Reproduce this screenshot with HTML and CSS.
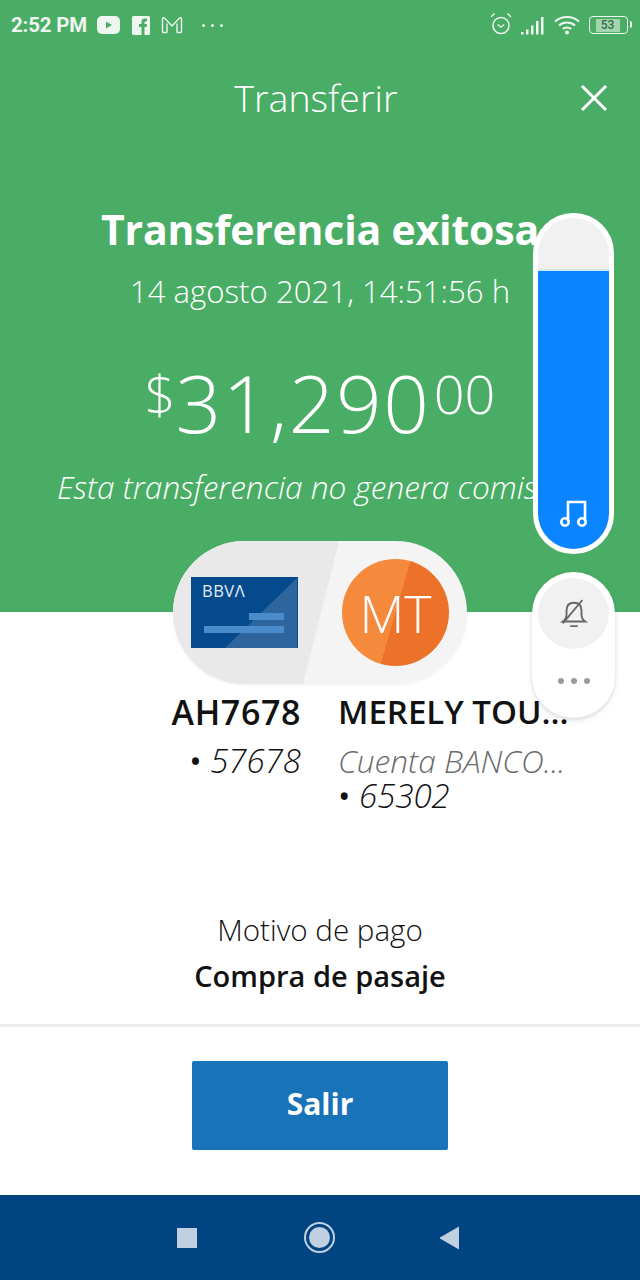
FILE: index.html
```html
<!DOCTYPE html>
<html lang="es">
<head>
<meta charset="utf-8">
<title>Transferir</title>
<link rel="stylesheet" href="styles.css">
</head>
<body>
<div class="screen">
  <section class="hero">
    <div class="status">
      <div class="status-left">
        <span class="clock">2:52 PM</span>
        <svg class="st-yt" viewBox="0 0 23 18"><rect width="23" height="18" rx="5" fill="#eef6ef"/><path d="M9 5.500v7l6-3.500z" fill="#4bad66"/></svg>
        <svg class="st-fb" viewBox="0 0 18 19"><rect width="18" height="19" rx="1.500" fill="#eef6ef"/><path d="M9.500 19v-8H7V8h2.500V5.800C9.500 3.600 10.800 2.500 12.800 2.500H15V5.500H13.600C12.700 5.500 12.500 5.900 12.500 6.600V8H15L14.600 11H12.500V19z" fill="#4bad66"/></svg>
        <svg class="st-mail" viewBox="0 0 22 18"><path d="M1.500 16.500V2.800c0-1.100 1.100-1.500 1.900-.7L11 10l7.600-7.900c.8-.8 1.900-.4 1.900.7v13.700M6 16.500V7.500M16 16.500V7.500M1.500 16.500H6M16 16.500h4.500" fill="none" stroke="#eef6ef" stroke-width="1.400"/></svg>
        <span class="st-dots"><i></i><i></i><i></i></span>
      </div>
      <div class="status-right">
        <svg class="st-alarm" viewBox="0 0 22 23"><circle cx="11" cy="13.500" r="8" fill="none" stroke="#eef6ef" stroke-width="1.500"/><path d="M7.800 12.500l3.200 2.700 3.200-2.700M1 5l3.500-3.500M21 5l-3.500-3.500" fill="none" stroke="#eef6ef" stroke-width="1.400"/></svg>
        <svg class="st-signal" viewBox="0 0 24 19"><path d="M1 16h2.500v2.500H1zM6 13.500h2.500v5H6zM11 9.500h2.500v9H11zM16 5h2.500v13.500H16zM21 1h2.500v17.500H21z" fill="#eef6ef"/></svg>
        <svg class="st-wifi" viewBox="0 0 26 21"><path d="M1 7.500c6.500-6 17.500-6 24 0M5 11.500c4.500-4 11.500-4 16 0M8.800 15c2.300-1.900 6.100-1.900 8.400 0" fill="none" stroke="#eef6ef" stroke-width="2"/><circle cx="13" cy="18.500" r="2" fill="#eef6ef"/></svg>
        <div class="st-battery"><span class="st-level">53</span></div>
      </div>
    </div>
    <header class="title-bar">
      <h1 class="title">Transferir</h1>
      <svg class="close" viewBox="0 0 28 28"><path d="M2 2l24 24M26 2L2 26" fill="none" stroke="#fff" stroke-width="3"/></svg>
    </header>
    <h2 class="headline">Transferencia exitosa</h2>
    <p class="stamp">14 agosto 2021, 14:51:56 h</p>
    <p class="amount"><span class="cur">$</span><span class="whole">31,290</span><span class="cents">00</span></p>
    <p class="note">Esta transferencia no genera comisión</p>
  </section>

  <main class="details">
    <div class="parties">
      <div class="pill">
        <div class="pill-left">
          <svg class="bank-card" viewBox="0 0 107 71">
            <rect width="107" height="71" fill="#064a8e"/>
            <path d="M34 71L106 1v70z" fill="#2e659c"/>
            <rect x="58" y="36" width="35" height="7" fill="#4a8ccb"/>
            <rect x="13" y="49" width="80" height="7" fill="#4a8ccb"/>
            <text x="11" y="20" class="bank-name">BBVΛ</text>
          </svg>
        </div>
        <div class="pill-right">
          <div class="avatar">MT</div>
        </div>
      </div>
    </div>
    <div class="accounts">
      <div class="acct acct-from">
        <div class="acct-name acct-code">AH7678</div>
        <div class="acct-num">• <em>57678</em></div>
      </div>
      <div class="acct acct-to">
        <div class="acct-name">MERELY TOU...</div>
        <div class="acct-bank">Cuenta BANCO...</div>
        <div class="acct-num">• <em>65302</em></div>
      </div>
    </div>
    <div class="reason">
      <div class="reason-label">Motivo de pago</div>
      <div class="reason-value">Compra de pasaje</div>
    </div>
  </main>

  <footer class="actions">
    <button class="exit" type="button">Salir</button>
  </footer>

  <nav class="navbar">
    <span class="nav-square"></span>
    <span class="nav-home"><span class="nav-home-dot"></span></span>
    <svg class="nav-back" viewBox="0 0 20 24"><path d="M1 12L20 1v22z" fill="#c0d0e1" stroke="#c0d0e1" stroke-linejoin="round"/></svg>
  </nav>

  <!-- system volume panel floating above the app -->
  <div class="volume">
    <div class="volume-fill">
      <svg class="note-icon" viewBox="0 0 28 28"><path d="M8 22V3h17v19" fill="none" stroke="#fff" stroke-width="2.600"/><circle cx="5" cy="23" r="3.700" fill="none" stroke="#fff" stroke-width="2.600"/><circle cx="22" cy="23" r="3.700" fill="none" stroke="#fff" stroke-width="2.600"/></svg>
    </div>
  </div>
  <div class="ringer">
    <div class="ringer-btn">
      <svg class="bell" viewBox="0 0 30 32"><path d="M3 24c3-2 4-4 4-8v-4c0-5 3-8 8-8s8 3 8 8v4c0 4 1 6 4 8z" fill="none" stroke="#666" stroke-width="2"/><path d="M11 29h8M3 26L24 1" fill="none" stroke="#666" stroke-width="2"/></svg>
    </div>
    <div class="ringer-more"><i></i><i></i><i></i></div>
  </div>
</div>
</body>
</html>
```
FILE: styles.css
```css
* { box-sizing: border-box; }
html, body { margin: 0; padding: 0; }
body { font-family: "Open Sans", "Liberation Sans", sans-serif; background: #fff; color: #121212; }
p, h1, h2 { margin: 0; font-weight: inherit; }

.screen { position: relative; width: 640px; height: 1280px; overflow: hidden; display: flex; flex-direction: column; }

/* green summary block */
.hero { height: 612px; background: #4aad66; color: #fff; display: flex; flex-direction: column; align-items: center; flex: none; }
.status { width: 100%; height: 50px; padding: 0 8px 0 11px; display: flex; justify-content: space-between; align-items: center; flex: none; }
.status-left, .status-right { display: flex; align-items: center; }
.clock { font: 700 20.500px "Roboto", sans-serif; color: #eef6ef; letter-spacing: -.2px; }
.st-yt { width: 23px; height: 18px; margin-left: 10px; }
.st-fb { width: 18px; height: 19px; margin-left: 12px; }
.st-mail { width: 22px; height: 18px; margin-left: 11px; }
.st-dots { display: flex; gap: 6px; margin-left: 19px; }
.st-dots i { width: 3px; height: 3px; border-radius: 50%; background: #eef6ef; }
.st-alarm { width: 22px; height: 23px; margin-top: -3px; }
.st-signal { width: 24px; height: 19px; margin-left: 8px; }
.st-wifi { width: 26px; height: 21px; margin-left: 10px; margin-top: -2px; }
.st-battery { position: relative; width: 39px; height: 18px; margin-left: 9px; margin-right: 4px; border: 1.500px solid #eef6ef; border-radius: 4px; padding: 1.500px; }
.st-battery::after { content: ""; position: absolute; right: -5px; top: 4px; width: 2px; height: 7px; background: #eef6ef; border-radius: 0 2px 2px 0; }
.st-level { display: block; width: 24px; height: 100%; background: #a4d4b0; border-radius: 1px; font: 500 12px/12px "Roboto", sans-serif; color: #2f6d40; text-align: center; margin-left: 4px; }

.title-bar { position: relative; width: 100%; height: 100px; flex: none; display: flex; align-items: flex-start; justify-content: center; }
.title { font-size: 37.500px; font-weight: 300; line-height: 48px; margin: 24px 8px 0 0; }
.close { position: absolute; right: 32px; top: 34px; width: 28px; height: 28px; }

.headline { font-size: 41px; font-weight: 700; line-height: 54px; margin-top: 52px; white-space: nowrap; letter-spacing: -.2px; }
.stamp { font-size: 31.200px; font-weight: 300; line-height: 40px; margin-top: 15px; white-space: nowrap; }
.amount { display: flex; align-items: flex-start; font-weight: 300; margin-top: 42px; height: 96px; white-space: nowrap; }
.whole { font-size: 80px; line-height: 98px; letter-spacing: 1.600px; }
.cur { font-size: 54px; line-height: 80px; }
.cents { font-size: 54px; line-height: 80px; margin-left: 3px; }
.note { font-size: 31.600px; font-style: italic; font-weight: 300; line-height: 42px; margin: 17px 3px 0 0; white-space: nowrap; }

/* white details block */
.details { flex: 1; position: relative; display: flex; flex-direction: column; align-items: stretch; }
.parties { display: flex; justify-content: center; margin-top: -71px; height: 143px; }
.pill { width: 294px; height: 143px; border-radius: 72px; overflow: hidden; position: relative; background: #f4f4f4; box-shadow: 0 1px 3px rgba(0,0,0,.06); display: flex; }
.pill-left { position: absolute; left: 0; top: 0; bottom: 0; width: 166px; background: #e9e9e9; clip-path: polygon(0 0, 100% 0, 130px 100%, 0 100%); }
.bank-card { position: absolute; left: 18px; top: 36px; width: 107px; height: 71px; }
.bank-name { font: 500 16.500px "Open Sans", sans-serif; fill: #e3ecf5; letter-spacing: .5px; }
.pill-right { position: absolute; right: 18px; top: 18px; }
.avatar { width: 107px; height: 107px; border-radius: 50%; background: linear-gradient(106deg, #f68a3c 0 50%, #ec7229 50% 100%); color: #fff; display: flex; align-items: center; justify-content: center; font-weight: 300; font-size: 52px; }

.accounts { display: flex; margin-top: 6px; height: 160px; }
.acct { font-size: 33px; white-space: nowrap; }
.acct-from { width: 301px; text-align: right; }
.acct-to { margin-left: 37px; width: 240px; overflow: hidden; }
.acct-name { font-weight: 600; font-size: 33px; line-height: 44px; }
.acct-code { font-size: 34px; letter-spacing: .6px; }
.acct-num { font-weight: 400; line-height: 34px; margin-top: 10px; }
.acct-num em { font-style: italic; font-weight: 300; }
.acct-bank { font-size: 31.700px; font-style: italic; font-weight: 300; color: #6b6b6b; line-height: 34px; margin-top: 10px; }
.acct-bank + .acct-num { margin-top: 1px; }

.reason { text-align: center; margin-top: 60px; }
.reason-label { font-size: 29.600px; font-weight: 300; line-height: 40px; }
.reason-value { font-size: 29px; font-weight: 600; line-height: 40px; margin-top: 6px; }

.actions { height: 171px; flex: none; border-top: 3px solid #ececec; display: flex; justify-content: center; align-items: flex-start; padding-top: 34px; }
.exit { width: 256px; height: 89px; padding: 0 0 4px; background: #1973b8; color: #fff; border: 0; border-radius: 2px; font: 700 30px "Open Sans", sans-serif; }

/* android navigation */
.navbar { height: 85px; flex: none; background: #004481; display: flex; align-items: center; position: relative; padding-left: 177px; }
.nav-square { width: 20px; height: 20px; background: #c0d0e1; }
.nav-home { width: 31px; height: 31px; border: 2.500px solid #c0d0e1; border-radius: 50%; margin-left: 107px; display: flex; align-items: center; justify-content: center; }
.nav-home-dot { width: 21px; height: 21px; border-radius: 50%; background: #c0d0e1; }
.nav-back { width: 20px; height: 24px; margin-left: 104px; }

/* volume overlay */
.volume { position: absolute; left: 533px; top: 213px; width: 81px; height: 341px; border-radius: 41px; border: 5px solid #fff; overflow: hidden; background: #f1f1f1; }
.volume-fill { position: absolute; left: 0; right: 0; bottom: 0; top: 51px; background: #0a84ff; border-top: 2px solid #cfe6fb; }
.note-icon { position: absolute; left: 22px; top: 228px; width: 28px; height: 28px; }
.ringer { position: absolute; left: 532px; top: 572px; width: 83px; height: 146px; border-radius: 42px; background: #fff; box-shadow: 0 2px 5px rgba(0,0,0,.16); padding: 6px; }
.ringer-btn { width: 71px; height: 71px; border-radius: 50%; background: #f1f1f1; display: flex; align-items: center; justify-content: center; }
.bell { width: 28px; height: 30px; }
.ringer-more { display: flex; justify-content: center; gap: 7px; margin-top: 29px; }
.ringer-more i { width: 6px; height: 6px; border-radius: 50%; background: #9a9a9a; }
```
